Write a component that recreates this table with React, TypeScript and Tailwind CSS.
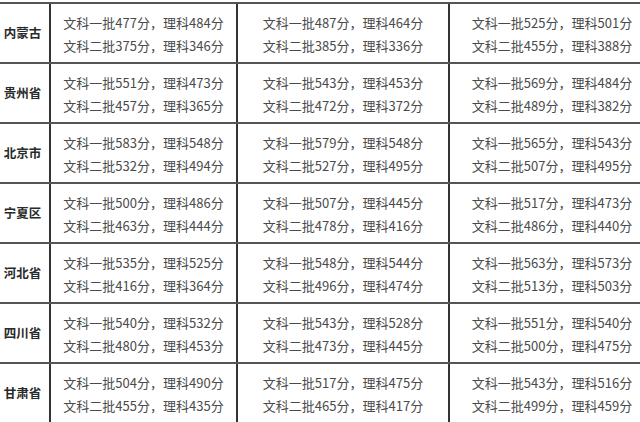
import React from "react";

type Cell = [string, string, string, string];
type Row = { name: string; cells: Cell[] };

const rows: Row[] = [
  { name: "内蒙古", cells: [["477", "484", "375", "346"], ["487", "464", "385", "336"], ["525", "501", "455", "388"]] },
  { name: "贵州省", cells: [["551", "473", "457", "365"], ["543", "453", "472", "372"], ["569", "484", "489", "382"]] },
  { name: "北京市", cells: [["583", "548", "532", "494"], ["579", "548", "527", "495"], ["565", "543", "507", "495"]] },
  { name: "宁夏区", cells: [["500", "486", "463", "444"], ["507", "445", "478", "416"], ["517", "473", "486", "440"]] },
  { name: "河北省", cells: [["535", "525", "416", "364"], ["548", "544", "496", "474"], ["563", "573", "513", "503"]] },
  { name: "四川省", cells: [["540", "532", "480", "453"], ["543", "528", "473", "445"], ["551", "540", "500", "475"]] },
  { name: "甘肃省", cells: [["504", "490", "455", "435"], ["517", "475", "465", "417"], ["543", "516", "499", "459"]] },
];

function Score({ c }: { c: Cell }) {
  return (
    <div className="flex flex-col justify-center items-center leading-[23px] pt-[1px]">
      <div>文科一批{c[0]}分，理科{c[1]}分</div>
      <div>文科二批{c[2]}分，理科{c[3]}分</div>
    </div>
  );
}

export default function App() {
  return (
    <div
      className="w-[640px] h-[422px] overflow-hidden bg-white text-[13px] text-[#4a4a4a]"
      style={{ fontFamily: '"Noto Sans CJK SC", "Microsoft YaHei", sans-serif' }}
    >
      <div className="mt-[2px] flex flex-col">
        {rows.map((r) => (
          <div
            key={r.name}
            className="grid grid-cols-[51px_187px_212px_190px] h-[60px] border-t-2 border-[#555]"
          >
            <div className="flex items-center justify-center pr-[4px] border-r-2 border-[#333] font-bold text-[12.5px] text-[#2a2a2a]">
              {r.name}
            </div>
            <div className="flex items-center justify-center border-r-2 border-[#333]">
              <Score c={r.cells[0]} />
            </div>
            <div className="flex items-center justify-center border-r-2 border-[#333]">
              <Score c={r.cells[1]} />
            </div>
            <div className="flex items-center justify-center pl-[14px]">
              <Score c={r.cells[2]} />
            </div>
          </div>
        ))}
      </div>
    </div>
  );
}
